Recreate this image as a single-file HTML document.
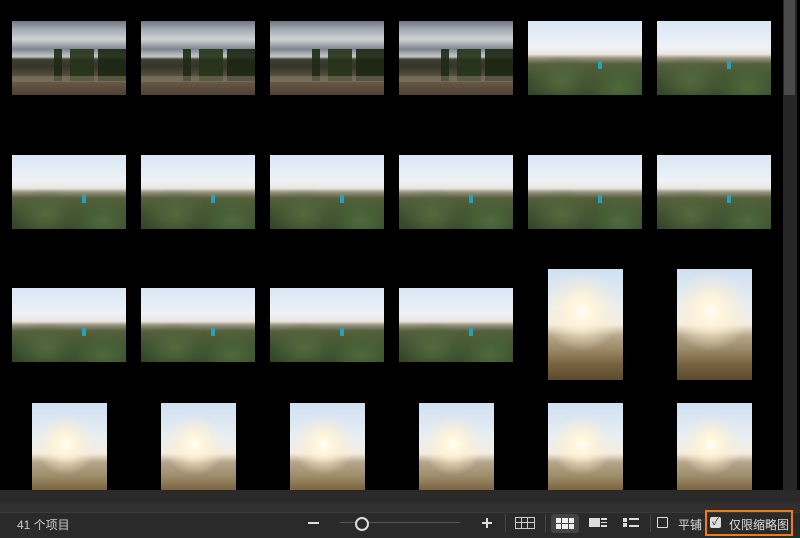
<!DOCTYPE html>
<html><head><meta charset="utf-8"><style>
body{margin:0;width:800px;height:538px;background:#000;position:relative;overflow:hidden;font-family:"Liberation Sans","Noto Sans CJK SC",sans-serif}
.t{position:absolute}
.A{width:114px;height:74px;background:linear-gradient(180deg,#6f7682 0%,#a7adb6 12%,#d0d2d4 25%,#7d8590 38%,#c7c8c6 48%,#3d3f32 52%,#35362a 62%,#6a5b4a 80%,#4e4033 100%)}
.A:before{content:"";position:absolute;left:42px;top:28px;width:72px;height:32px;background:linear-gradient(90deg,#1e2a14 0,#1e2a14 8px,transparent 8px,transparent 16px,#26331a 16px,#26331a 40px,transparent 40px,transparent 44px,#1c2612 44px,#1c2612 72px);opacity:.9}
.A:after{content:"";position:absolute;left:0;top:55px;width:114px;height:6px;background:#8a7d6c;opacity:.5}
.B{width:114px;height:74px;background:radial-gradient(ellipse at 30% 80%,#556a3e 0%,transparent 30%),radial-gradient(ellipse at 80% 90%,#4f6a3c 0%,transparent 30%),linear-gradient(180deg,#d9e6f4 0%,#eef2f6 35%,#e9e6df 45%,#9a9482 50%,#55603c 58%,#3c4e2e 80%,#33442a 100%)}
.B:after{content:"";position:absolute;left:70px;top:40px;width:4px;height:8px;background:#2aa0b8}
.C{width:75px;height:111px;background:radial-gradient(circle at 45% 38%,#fffef6 0%,#fff5da 14%,rgba(255,240,210,.5) 30%,transparent 50%),linear-gradient(180deg,#cfe0f2 0%,#e9eef2 35%,#f4ece0 50%,#b6a78a 60%,#9c8a68 72%,#7a6440 85%,#5a4a30 100%)}
.D{width:75px;height:87px;background:radial-gradient(circle at 45% 48%,#fffef6 0%,#fff5da 14%,rgba(255,240,210,.5) 30%,transparent 50%),linear-gradient(180deg,#cfe0f2 0%,#e9eef2 40%,#f4ece0 58%,#b6a78a 68%,#9c8a68 85%,#7a6440 100%)}
.bar{position:absolute;left:0;width:800px}
.ic{position:absolute;color:#ddd;font-size:12px}
</style></head><body>
<div class="t A" style="left:12px;top:21px"></div>
<div class="t A" style="left:141px;top:21px"></div>
<div class="t A" style="left:270px;top:21px"></div>
<div class="t A" style="left:399px;top:21px"></div>
<div class="t B" style="left:528px;top:21px"></div>
<div class="t B" style="left:657px;top:21px"></div>
<div class="t B" style="left:12px;top:155px"></div>
<div class="t B" style="left:141px;top:155px"></div>
<div class="t B" style="left:270px;top:155px"></div>
<div class="t B" style="left:399px;top:155px"></div>
<div class="t B" style="left:528px;top:155px"></div>
<div class="t B" style="left:657px;top:155px"></div>
<div class="t B" style="left:12px;top:288px"></div>
<div class="t B" style="left:141px;top:288px"></div>
<div class="t B" style="left:270px;top:288px"></div>
<div class="t B" style="left:399px;top:288px"></div>
<div class="t C" style="left:548px;top:269px"></div>
<div class="t C" style="left:677px;top:269px"></div>
<div class="t D" style="left:32px;top:403px"></div>
<div class="t D" style="left:161px;top:403px"></div>
<div class="t D" style="left:290px;top:403px"></div>
<div class="t D" style="left:419px;top:403px"></div>
<div class="t D" style="left:548px;top:403px"></div>
<div class="t D" style="left:677px;top:403px"></div>
<div style="position:absolute;left:783px;top:0;width:14px;height:490px;background:#262626"></div>
<div style="position:absolute;left:784px;top:0;width:11px;height:95px;background:#4a4a4a"></div>
<div class="bar" style="top:490px;height:13px;background:#2a2a2a"></div>
<div class="bar" style="top:503px;height:9px;background:#303030"></div>
<div class="bar" style="top:512px;height:26px;background:#2a2a2a;border-top:1px solid #3a3a3a;box-sizing:border-box"></div>
<div class="ic" style="left:17px;top:516px;color:#ccc">41 个项目</div>
<div style="position:absolute;left:308px;top:522px;width:11px;height:2px;background:#ddd"></div>
<div style="position:absolute;left:340px;top:522px;width:120px;height:1px;background:#555"></div>
<div style="position:absolute;left:355px;top:517px;width:10px;height:10px;border:2px solid #ddd;border-radius:50%;background:#2a2a2a"></div>
<div style="position:absolute;left:482px;top:522px;width:10px;height:2px;background:#ddd"></div>
<div style="position:absolute;left:486px;top:518px;width:2px;height:10px;background:#ddd"></div>
<div style="position:absolute;left:505px;top:514px;width:1px;height:18px;background:#444"></div>
<div style="position:absolute;left:515px;top:517px;width:18px;height:10px;border:1px solid #ccc;background:linear-gradient(90deg,transparent 5px,#ccc 5px,#ccc 6px,transparent 6px,transparent 11px,#ccc 11px,#ccc 12px,transparent 12px),linear-gradient(180deg,transparent 4px,#ccc 4px,#ccc 5px,transparent 5px)"></div>
<div style="position:absolute;left:545px;top:514px;width:1px;height:18px;background:#444"></div>
<div style="position:absolute;left:551px;top:514px;width:28px;height:19px;background:#444;border-radius:3px"></div>
<div style="position:absolute;left:556px;top:518px;width:18px;height:11px;background:linear-gradient(90deg,transparent 5px,#444 5px,#444 6px,transparent 6px,transparent 12px,#444 12px,#444 13px,transparent 13px),linear-gradient(180deg,#eee 5px,#444 5px,#444 6px,#eee 6px)"></div>
<div style="position:absolute;left:589px;top:518px;width:11px;height:9px;background:#ddd"></div>
<div style="position:absolute;left:601px;top:518px;width:6px;height:9px;background:linear-gradient(180deg,#ddd 2px,transparent 2px,transparent 4px,#ddd 4px,#ddd 5px,transparent 5px,transparent 7px,#ddd 7px)"></div>
<div style="position:absolute;left:623px;top:518px;width:4px;height:9px;background:linear-gradient(180deg,#ddd 4px,transparent 4px,transparent 5px,#ddd 5px)"></div>
<div style="position:absolute;left:629px;top:518px;width:10px;height:9px;background:linear-gradient(180deg,#ddd 2px,transparent 2px,transparent 7px,#ddd 7px)"></div>
<div style="position:absolute;left:650px;top:514px;width:1px;height:18px;background:#444"></div>
<div style="position:absolute;left:657px;top:517px;width:9px;height:9px;border:1.5px solid #ddd;border-radius:1px"></div>
<div class="ic" style="left:678px;top:516px">平铺</div>
<div style="position:absolute;left:705px;top:510px;width:84px;height:22px;border:2px solid #f07c1e"></div>
<div style="position:absolute;left:710px;top:517px;width:11px;height:11px;background:#ddd;border-radius:2px;color:#2a2a2a;font-size:10px;line-height:11px;text-align:center">✓</div>
<div class="ic" style="left:729px;top:516px">仅限缩略图</div>
</body></html>
